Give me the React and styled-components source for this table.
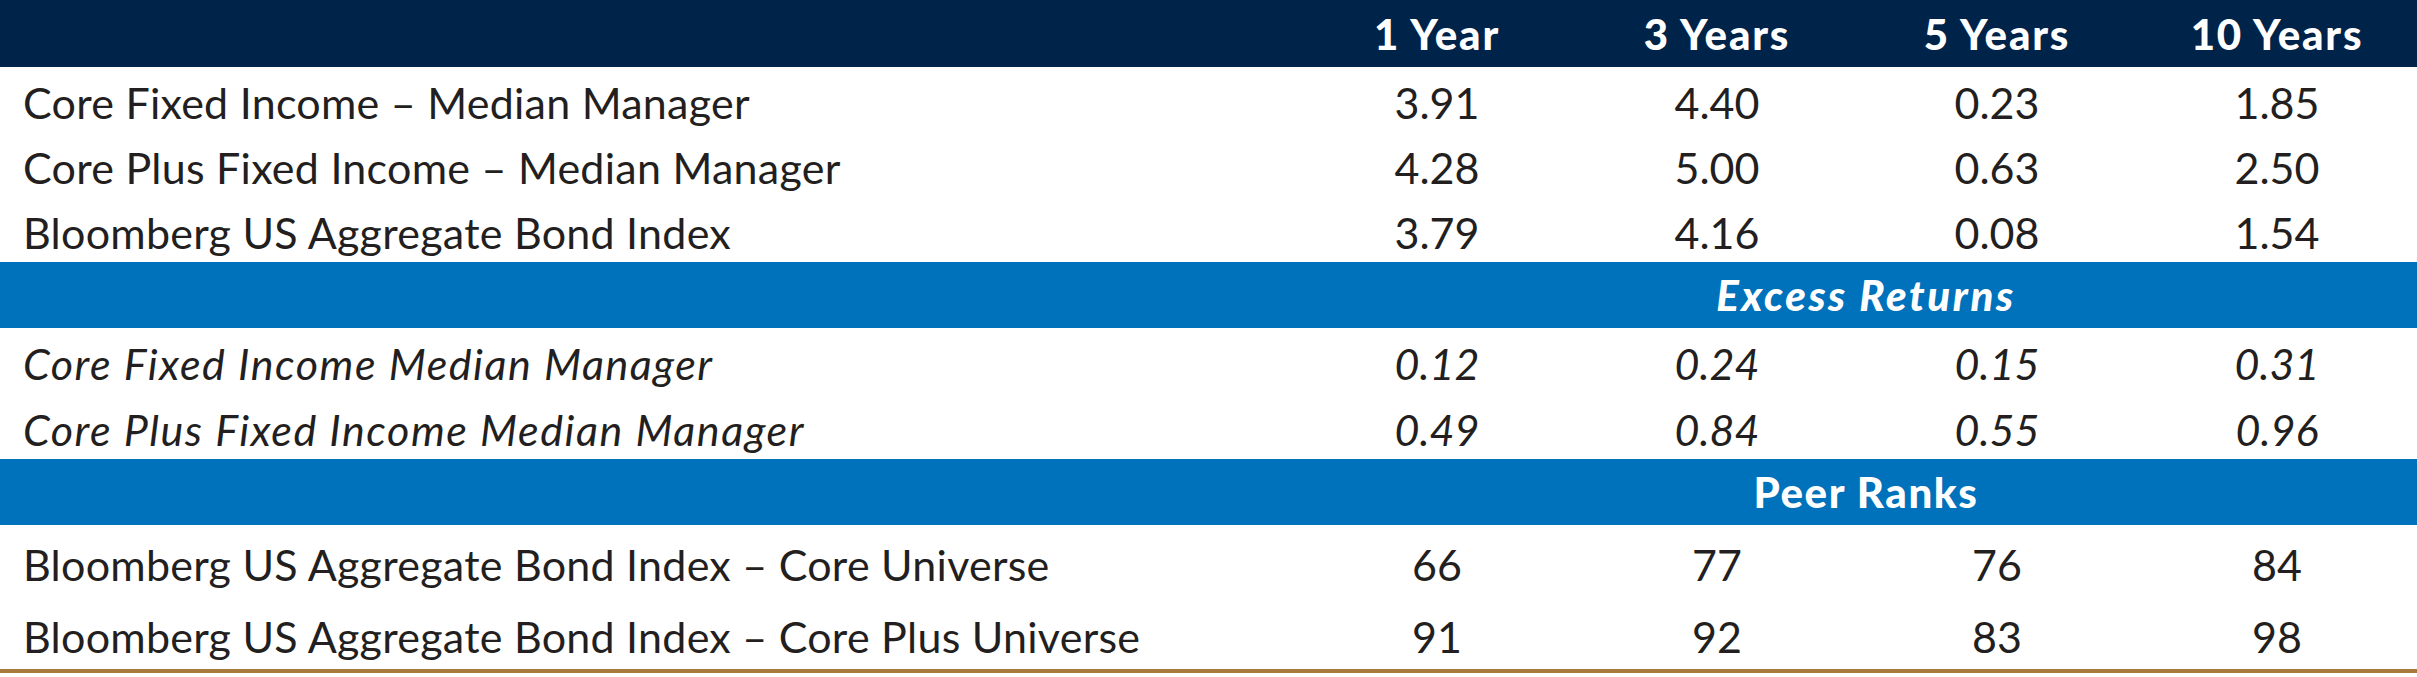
import React from "react";
import styled, { createGlobalStyle } from "styled-components";

const GlobalStyle = createGlobalStyle`
  html, body {
    margin: 0;
    padding: 0;
    background: #ffffff;
  }
  body {
    font-family: Lato, "Open Sans", sans-serif;
    color: #231f20;
  }
`;

const Table = styled.div`
  width: 2417px;
  display: flex;
  flex-direction: column;
  border-bottom: 4px solid #a57a3c;
`;

const Row = styled.div`
  display: grid;
  grid-template-columns: 1fr repeat(4, 280px);
  align-items: center;
  height: ${(p) => p.$height}px;
  padding-top: ${(p) => p.$shift || 0}px;
  box-sizing: border-box;
  background: ${(p) => p.$bg || "transparent"};
`;

const HeadCell = styled.div`
  font-size: 42px;
  font-weight: 900;
  color: #ffffff;
  text-align: center;
  letter-spacing: 1.8px;
`;

const Label = styled.div`
  padding-left: 23px;
  font-size: 43px;
  font-style: ${(p) => (p.$italic ? "italic" : "normal")};
  letter-spacing: ${(p) => (p.$italic ? 1.55 : 0.25)}px;
  white-space: nowrap;
`;

const Value = styled.div`
  font-size: 43px;
  text-align: center;
  font-style: ${(p) => (p.$italic ? "italic" : "normal")};
`;

const SectionTitle = styled.div`
  grid-column: 2 / 6;
  padding-left: 18px;
  text-align: center;
  font-size: 42px;
  font-weight: 900;
  letter-spacing: ${(p) => (p.$italic ? 2.6 : 1.6)}px;
  font-style: ${(p) => (p.$italic ? "italic" : "normal")};
  color: #ffffff;
`;

const NAVY = "#002349";
const BLUE = "#0071bb";

const sections = [
  {
    rows: [
      ["Core Fixed Income – Median Manager", "3.91", "4.40", "0.23", "1.85"],
      ["Core Plus Fixed Income – Median Manager", "4.28", "5.00", "0.63", "2.50"],
      ["Bloomberg US Aggregate Bond Index", "3.79", "4.16", "0.08", "1.54"],
    ],
    height: 65,
  },
  {
    title: "Excess Returns",
    italic: true,
    rows: [
      ["Core Fixed Income Median Manager", "0.12", "0.24", "0.15", "0.31"],
      ["Core Plus Fixed Income Median Manager", "0.49", "0.84", "0.55", "0.96"],
    ],
    height: 65.5,
  },
  {
    title: "Peer Ranks",
    rows: [
      ["Bloomberg US Aggregate Bond Index – Core Universe", "66", "77", "76", "84"],
      ["Bloomberg US Aggregate Bond Index – Core Plus Universe", "91", "92", "83", "98"],
    ],
    height: 72,
  },
];

export default function App() {
  return (
    <>
      <GlobalStyle />
      <Table>
        <Row $height={67} $bg={NAVY}>
          <div />
          <HeadCell>1 Year</HeadCell>
          <HeadCell>3 Years</HeadCell>
          <HeadCell>5 Years</HeadCell>
          <HeadCell>10 Years</HeadCell>
        </Row>
        {sections.map((section, i) => (
          <React.Fragment key={i}>
            {section.title && (
              <Row $height={66} $bg={BLUE}>
                <SectionTitle $italic={section.italic}>{section.title}</SectionTitle>
              </Row>
            )}
            {section.rows.map((row) => (
              <Row key={row[0]} $height={section.height} $shift={6}>
                <Label $italic={section.italic}>{row[0]}</Label>
                {row.slice(1).map((v, j) => (
                  <Value key={j} $italic={section.italic}>
                    {v}
                  </Value>
                ))}
              </Row>
            ))}
          </React.Fragment>
        ))}
      </Table>
    </>
  );
}
